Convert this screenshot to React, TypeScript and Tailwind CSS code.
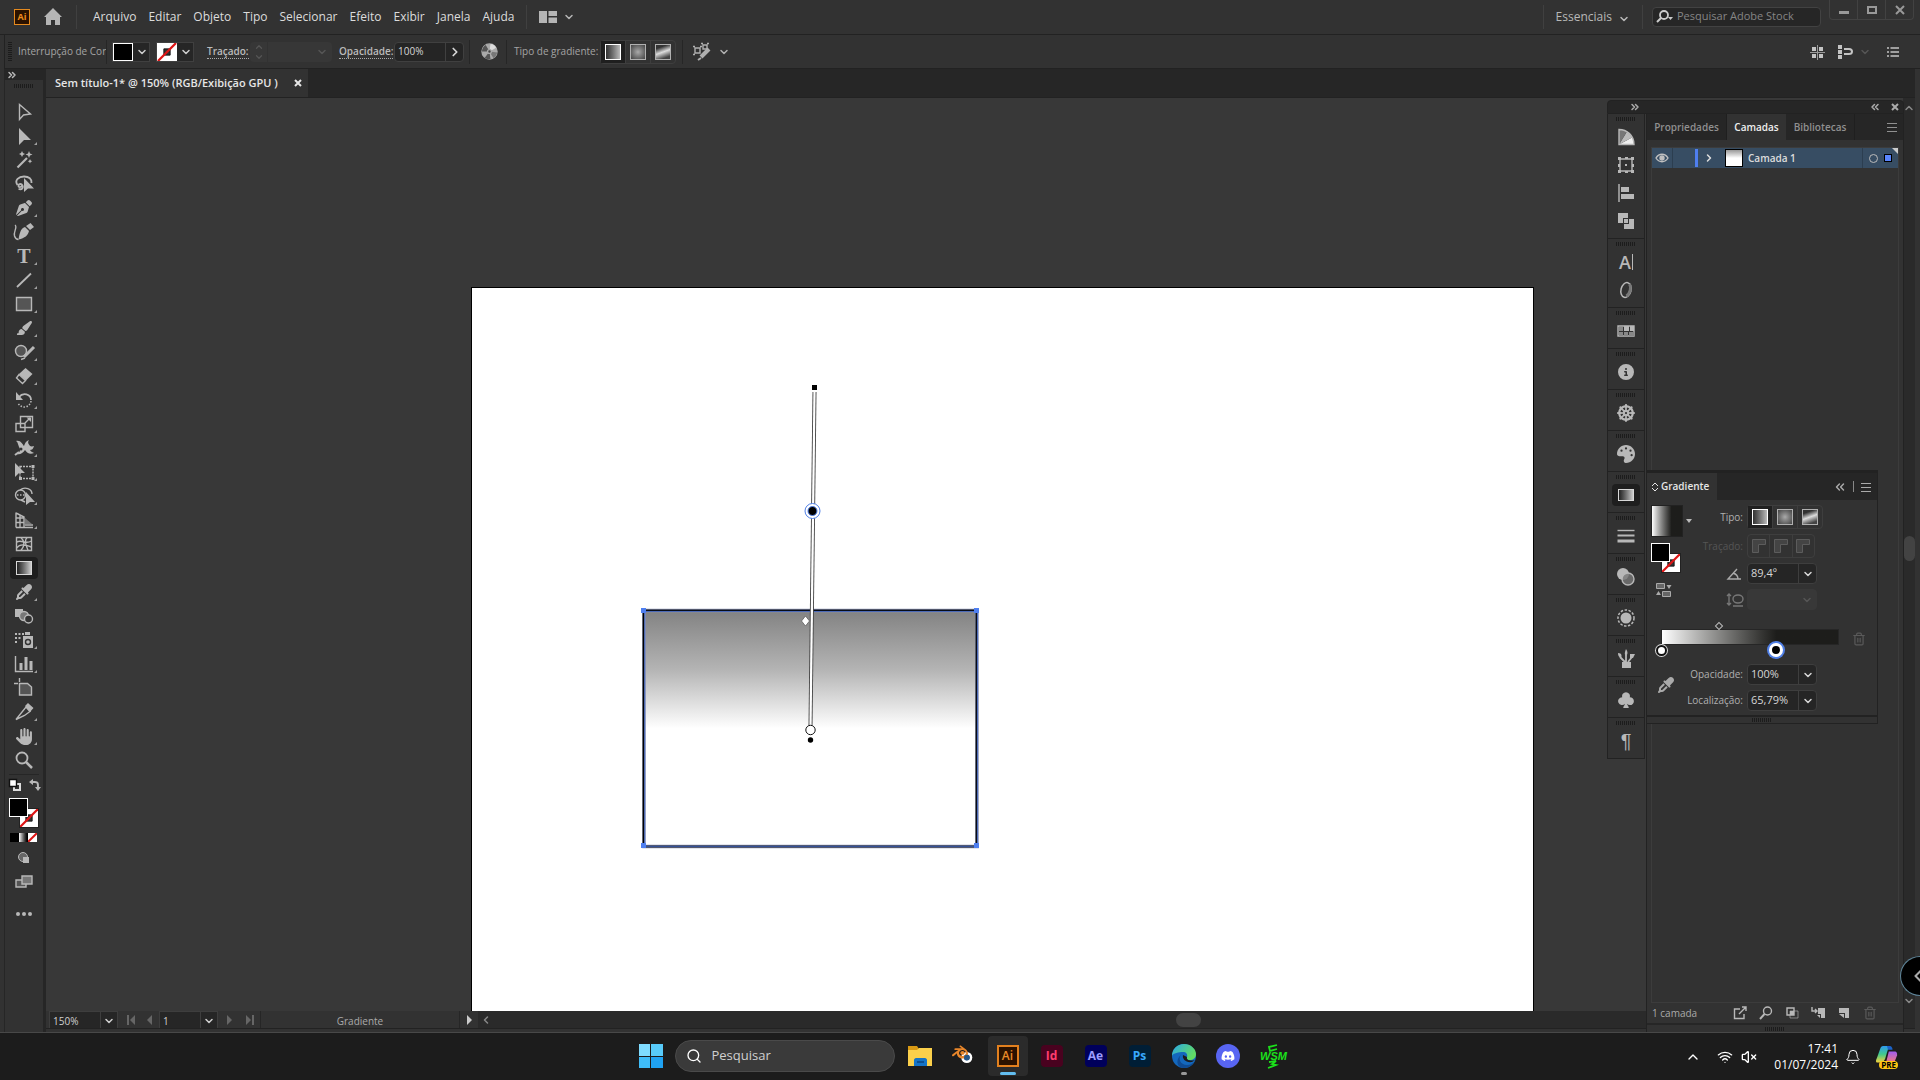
import type { ReactNode } from "react";
import { Bell, ChevronDown, ChevronLeft, ChevronRight, ChevronsLeft, ChevronsRight, ChevronUp, Search, Trash2, VolumeX, Wifi } from "lucide-react";
import { FaCircleInfo, FaDharmachakra, FaDiscord, FaEyeDropper, FaHand, FaPaintbrush, FaPalette, FaPenNib } from "react-icons/fa6";
import { BsSuitClubFill } from "react-icons/bs";
import { SiBlender } from "react-icons/si";

const MENUS = ["Arquivo", "Editar", "Objeto", "Tipo", "Selecionar", "Efeito", "Exibir", "Janela", "Ajuda"];

function Svg({ children, size = "h-[22px] w-[22px]", box = "0 0 22 22" }: { children: ReactNode; size?: string; box?: string }) {
  return (
    <svg viewBox={box} className={`${size} shrink-0 overflow-visible`} fill="none" stroke="currentColor" strokeWidth="1.4" aria-hidden="true">
      {children}
    </svg>
  );
}

const TOOLS: { name: string; more?: boolean; active?: boolean; icon: ReactNode }[] = [
  { name: "Seleção", icon: <Svg><path d="M6.500 3.500V18.500l4-4.500 7-1z" /></Svg> },
  { name: "Seleção direta", more: true, icon: <Svg><path fill="currentColor" stroke="none" d="M6 3v17l5-5h7z" /></Svg> },
  {
    name: "Varinha mágica",
    icon: (
      <Svg>
        <path strokeWidth="2.200" d="M4.500 18.500 14 9" />
        <path fill="currentColor" stroke="none" d="m9 2 1 2 2 1-2 1-1 2-1-2-2-1 2-1zM16 2l1 2.500 2.500 1L17 6.500 16 9l-1-2.500-2.500-1 2.500-1zM17 10l.7 1.500 1.500.7-1.500.7L17 14.500l-.7-1.600-1.500-.7 1.500-.7z" />
      </Svg>
    ),
  },
  {
    name: "Laço",
    icon: (
      <Svg>
        <path strokeWidth="1.800" d="M5.500 16c4 1 5-1.500 4-3.500S6 10.500 5.500 12.500s2.500 2.500 3.500 0M4.500 12C1 7 6 3.500 11 3.500S19 6 18.500 10" />
        <path fill="currentColor" stroke="none" d="M11 5v14l4-3.500h6z" />
      </Svg>
    ),
  },
  { name: "Caneta", more: true, icon: <FaPenNib className="h-4 w-4" /> },
  {
    name: "Curvatura",
    icon: (
      <Svg>
        <path fill="currentColor" stroke="none" d="m13 5 4 4 4-3-3.500-4zM12 6c-3 1-5 3-6.500 12.500C12 17 15 14.500 16 10z" />
        <path d="M2 4c3 2-2 7-.5 11 1 3 3 3.500 4 3.500" />
      </Svg>
    ),
  },
  { name: "Texto", more: true, icon: <span className="font-['Liberation_Serif',serif] text-xl leading-5 font-bold">T</span> },
  { name: "Segmento de linha", more: true, icon: <Svg><path strokeWidth="1.800" d="M4 18 18 4.500" /></Svg> },
  { name: "Retângulo", more: true, icon: <Svg><path fill="#555" d="M3.500 4.500h15v13h-15z" /></Svg> },
  { name: "Pincel", more: true, icon: <FaPaintbrush className="h-4 w-4" /> },
  {
    name: "Shaper",
    more: true,
    icon: <Svg><circle cx="8" cy="10" r="5.500" fill="#555" /><path strokeWidth="3" d="m11 16 10-10" /><path strokeWidth="1.500" d="m8 18.500 4-1.500" /></Svg>,
  },
  {
    name: "Borracha",
    more: true,
    icon: <Svg><path fill="currentColor" stroke="none" d="m12.500 3 7 6-6.500 6.500-7-6.500z" /><path d="m6 9.500 6.500 6-3 3-6-5.500z" /></Svg>,
  },
  {
    name: "Girar",
    more: true,
    icon: <Svg><path strokeWidth="1.800" d="M6 8c4-5 12-3 12 3" /><path strokeWidth="1.500" strokeDasharray="1.500 1.500" d="M18 12c-1 7-10 8-13 2" /><path fill="currentColor" stroke="none" d="M3 3v8h7z" /></Svg>,
  },
  {
    name: "Escala",
    more: true,
    icon: <Svg><path d="M7.500 3.500h12v11h-12zM3 10.500h9v8H3zM12 10l5-5" /><path fill="currentColor" stroke="none" d="M13.500 4.500h4.500V9z" /></Svg>,
  },
  {
    name: "Largura",
    more: true,
    icon: (
      <Svg>
        <path fill="currentColor" stroke="none" d="M3 4c5-1 6 3 8 5 1-3 2-5 5-6-2 3 0 4 1 6 2 1 3 0 4 0-1 3-2 4-4 4 1 2 3 2 4 3-4 2-7 0-9-3-2 3-5 5-8 4 3-2 4-4 2-7C5 8 5 5 3 4z" />
        <circle cx="8" cy="12" r="1.500" fill="#323232" stroke="none" />
        <path d="m2 18 4-3" strokeWidth="2" />
      </Svg>
    ),
  },
  {
    name: "Transformação livre",
    more: true,
    icon: <Svg><path strokeDasharray="2 1" d="M7 5.500h13v12H7z" /><path fill="currentColor" stroke="none" d="M2 2v14l4-4h6zM18.500 4h3v3h-3zM18.500 16h3v3h-3zM6 16h3v3H6z" /></Svg>,
  },
  {
    name: "Construtor de formas",
    more: true,
    icon: <Svg><circle cx="7.500" cy="10" r="5" /><path d="M7 5c5-4 12-1 12 4M8 15l4 2" /><path strokeDasharray="1.500 1.500" d="M4 10h10" /><path fill="currentColor" stroke="none" d="M13 7v13l4-3h5z" /></Svg>,
  },
  {
    name: "Grade de perspectiva",
    more: true,
    icon: <Svg><path d="M3 3.500v15M3 4l8 4v10M7 5.500v13M3 9h8M3 13.500h8M3 18.500h17" /><path fill="#777" stroke="none" d="M12 9v6h7z" /><path d="M12 16h8" /></Svg>,
  },
  {
    name: "Malha",
    icon: <Svg><path d="M3.500 4.500h15v13h-15z" /><path d="M8 4.500c4 4 4 8 0 13M14 4.500c-4 4 0 9 1 13M3.500 9c6-3 8 3 15-1M3.500 15c4-5 9-3 15-1" /></Svg>,
  },
  {
    name: "Gradiente",
    active: true,
    icon: <span className="h-3.5 w-4 border border-[#d8d8d8] bg-linear-to-r from-[#222] to-[#ccc]" />,
  },
  { name: "Conta-gotas", more: true, icon: <FaEyeDropper className="h-4 w-4" /> },
  {
    name: "Mesclagem",
    icon: <Svg><path fill="currentColor" stroke="none" d="M2 4h8v8H2z" /><circle cx="11" cy="11" r="4.500" fill="#777" /><circle cx="15.500" cy="14" r="4" fill="#323232" /></Svg>,
  },
  {
    name: "Pulverizador de símbolo",
    more: true,
    icon: (
      <Svg>
        <path strokeDasharray="2 1.500" strokeWidth="2" d="M2 5h9M2 9h6M2 13h3" />
        <path fill="currentColor" stroke="none" d="M12 3h5v3h-5zM10 7h10v12H10z" />
        <circle cx="15" cy="13" r="2.500" stroke="#323232" />
      </Svg>
    ),
  },
  { name: "Gráfico de colunas", more: true, icon: <Svg><path d="M2.500 3v15.500H20" /><path strokeWidth="3" d="M8 17v-7M13 17V4M18 17V8" /></Svg> },
  { name: "Prancheta", icon: <Svg><path d="M1 6.500h4M6.500 1v4" /><path fill="#555" d="M6.500 6.500h8l4 3.500v8h-12z" /></Svg> },
  {
    name: "Fatia",
    more: true,
    icon: <Svg><path d="M3 18.500 13 6l4 4.500-5.500 4z" /><path fill="currentColor" d="m13 5 2-2 4.500 4L17 10z" /></Svg>,
  },
  { name: "Mão", more: true, icon: <FaHand className="h-[17px] w-[17px]" /> },
  { name: "Zoom", icon: <Svg><circle cx="9" cy="9" r="5.500" strokeWidth="1.800" /><path strokeWidth="2.500" d="m13 13 6 6" /></Svg> },
];

const DOCK: { name: string; active?: boolean; icon: ReactNode }[][] = [
  [
    {
      name: "Guia de cores",
      icon: (
        <Svg>
          <path fill="#f0f0f0" stroke="none" d="M4 18.500h15c0-3-.7-5-2-7z" />
          <path fill="#bbb" stroke="none" d="m4 18.500 13-7c-1-2.500-3-4.500-5-6z" />
          <path fill="#777" stroke="none" d="m4 18.500 8-13C9.500 4 7 3.500 4 3.500z" />
          <path d="M4 3.500v15h15c0-9-7-15-15-15z" />
        </Svg>
      ),
    },
    {
      name: "Transformar",
      icon: <Svg><path d="M5 5h12v12H5z" /><path fill="currentColor" stroke="none" d="M3 3h3v3H3zM16 3h3v3h-3zM3 16h3v3H3zM16 16h3v3h-3zM10 3h3v2h-3zM10 17h3v2h-3zM3 10h2v3H3zM17 10h2v3h-2zM10 10h2v2h-2z" /></Svg>,
    },
    { name: "Alinhar", icon: <Svg><path d="M4 2v18" /><path fill="currentColor" stroke="none" d="M6 5h8v5H6zM6 12h13v5H6z" /></Svg> },
    { name: "Pathfinder", icon: <Svg><path fill="currentColor" stroke="none" d="M3 3h10v5H8v5H3zM14 9h5v10H9v-5h5zM9 9h4v4H9z" /></Svg> },
  ],
  [
    { name: "Caractere", icon: <span className="border-r border-current pr-px text-lg leading-4 font-semibold">A</span> },
    {
      name: "OpenType",
      icon: <Svg><ellipse cx="11" cy="11" rx="5" ry="7.500" transform="rotate(14 11 11)" strokeWidth="1.500" /><path strokeWidth="3" stroke="#777" d="M14.500 5c2 3 1 9-3 12" /></Svg>,
    },
  ],
  [
    {
      name: "Amostras",
      icon: <Svg><path d="M3 6h16v10H3z" fill="#323232" /><path fill="currentColor" stroke="none" d="M9 6h5v5H9zM15 6h4v5h-4z" /><path fill="#888" stroke="none" d="M4 12h4v4H4zM9 12h4v4H9zM14 12h5v4h-5zM4 7h4v4H4z" /></Svg>,
    },
  ],
  [{ name: "Informações", icon: <FaCircleInfo className="h-4 w-4" /> }],
  [{ name: "Navegador", icon: <FaDharmachakra className="h-[18px] w-[18px]" /> }],
  [{ name: "Cor", icon: <FaPalette className="h-[18px] w-[18px] -scale-x-100" /> }],
  [{ name: "Gradiente", active: true, icon: <span className="h-3 w-4 border border-[#d8d8d8] bg-linear-to-r from-[#222] to-[#ccc]" /> }],
  [{ name: "Traçado", icon: <Svg><path d="M2.500 5.500h17" /><path strokeWidth="2" d="M2.500 10.500h17" /><path strokeWidth="3" d="M2.500 16h17" /></Svg> }],
  [{ name: "Transparência", icon: <Svg><circle cx="8" cy="8" r="6" fill="currentColor" stroke="none" /><circle cx="13" cy="13" r="6" fill="#777" fillOpacity=".8" /></Svg> }],
  [
    {
      name: "Aparência",
      icon: <Svg><circle cx="11" cy="11" r="5.500" fill="currentColor" stroke="none" /><circle cx="11" cy="11" r="8" strokeWidth="1.500" strokeDasharray="2.500 1.500" /></Svg>,
    },
  ],
  [
    {
      name: "Pincéis",
      icon: <Svg><path fill="currentColor" stroke="none" d="M7 14h9v6H7z" /><path strokeWidth="1.800" d="m10 14-5-5M11 14V7M13 14l4-5" /><path fill="currentColor" stroke="none" d="M3 5c4 0 4 3 3 5C4 9 3 8 3 5zM11 1c2 3 2 5 0 7-2-2-1-4 0-7zM15 6h5l-2 4h-3z" /></Svg>,
    },
  ],
  [{ name: "Símbolos", icon: <BsSuitClubFill className="h-[18px] w-[18px]" /> }],
  [{ name: "Parágrafo", icon: <span className="font-['Liberation_Sans',sans-serif] text-xl leading-5">¶</span> }],
];

function Grip({ className = "" }: { className?: string }) {
  return <span className={`block h-1 w-5 shrink-0 bg-[repeating-linear-gradient(90deg,#1c1c1c_0_1px,transparent_1px_2px)] ${className}`} />;
}

function Divider({ className = "" }: { className?: string }) {
  return <span className={`h-6 w-px shrink-0 bg-[#262626] ${className}`} />;
}

function Chevron({ className = "" }: { className?: string }) {
  return <ChevronDown className={`h-3 w-3 shrink-0 ${className}`} strokeWidth={3} />;
}

function StrokeNone() {
  return (
    <svg viewBox="0 0 20 20" className="block h-full w-full bg-white" aria-hidden="true">
      <path fill="#323232" stroke="#111" d="M6.500 6.500h7v7h-7z" />
      <path stroke="#dd1515" strokeWidth="2.500" d="M0 20 20 0" />
    </svg>
  );
}

// fill square overlapping the stroke square
function FillStroke() {
  return (
    <div className="relative h-[30px] w-[30px] shrink-0">
      <span className="absolute right-0 bottom-0 h-5 w-5 border border-[#222]"><StrokeNone /></span>
      <span className="absolute top-0 left-0 h-[19px] w-[19px] border border-white bg-black" />
    </div>
  );
}

function TypeButtons() {
  return (
    <div className="flex h-6 w-[76px] shrink-0 divide-x divide-[#3e3e3e] rounded-sm border border-[#3e3e3e]">
      <button aria-label="Gradiente linear" className="flex flex-1 items-center justify-center bg-[#1f1f1f]">
        <span className="h-4 w-4 border border-white bg-linear-to-r from-[#333] to-[#bbb]" />
      </button>
      <button aria-label="Gradiente radial" className="flex flex-1 items-center justify-center">
        <span className="h-4 w-4 border border-[#b0b0b0] bg-radial from-[#aaa] to-[#444]" />
      </button>
      <button aria-label="Gradiente de forma livre" className="flex flex-1 items-center justify-center">
        <span className="h-4 w-4 border border-[#b0b0b0] bg-linear-[160deg,#333_20%,#ddd_50%,#444_85%]" />
      </button>
    </div>
  );
}

function Combo({ id, value, label, disabled }: { id: string; value: string; label: string; disabled?: boolean }) {
  return (
    <div className={`flex h-[21px] w-[70px] rounded-sm border ${disabled ? "border-[#383838] bg-[#383838] text-[#555]" : "border-[#3e3e3e] bg-[#252525] text-[#d6d6d6]"}`}>
      <input id={id} aria-label={label} defaultValue={value} disabled={disabled} className="w-[50px] min-w-0 bg-transparent px-[3px] text-[11px] outline-none" />
      <button aria-label={`${label}: opções`} disabled={disabled} className={`flex flex-1 items-center justify-center ${disabled ? "" : "border-l border-[#3e3e3e]"}`}>
        <Chevron />
      </button>
    </div>
  );
}

function MenuBar() {
  return (
    <header className="flex h-[35px] shrink-0 items-center border-b border-[#222] pb-px pl-3.5 text-xs text-[#dcdcdc]">
      <span className="flex h-4 w-4 shrink-0 items-center justify-center border border-[#e58a1f] bg-[#2b1200] text-[9px] font-bold text-[#ee8c1c]">Ai</span>
      <button aria-label="Início" className="ml-[13px] text-[#b5b5b5]">
        <Svg size="h-5 w-5" box="0 0 20 20"><path fill="currentColor" stroke="none" d="M10 1 1 10h2v8h5v-5h4v5h5v-8h2z" /></Svg>
      </button>
      <Divider className="ml-[13px] bg-[#404040]" />
      <nav className="ml-4 flex gap-3">
        {MENUS.map((m) => (
          <button key={m}>{m}</button>
        ))}
      </nav>
      <Divider className="ml-3 bg-[#404040]" />
      <button aria-label="Organizar documentos" className="ml-3 flex items-center gap-1.5 text-[#b5b5b5]">
        <Svg size="h-3 w-[18px]" box="0 0 18 12"><path fill="currentColor" stroke="none" d="M0 0h8v12H0zM9.500 0H18v5H9.500zM9.500 6.500H18V12H9.500z" /></Svg>
        <Chevron />
      </button>
      <div className="ml-auto flex h-full items-center">
        <Divider className="bg-[#404040]" />
        <button className="ml-3 flex items-center gap-1.5 text-[#b8b8b8]">
          Essenciais <Chevron className="mt-1" />
        </button>
        <Divider className="ml-3 bg-[#404040]" />
        <label className="ml-[9px] flex h-5 w-[169px] items-center gap-1 rounded-sm border border-[#424242] bg-[#262626] pl-1">
          <Svg size="h-3.5 w-4" box="0 0 16 14"><circle cx="7" cy="5" r="4" stroke="#ccc" strokeWidth="1.800" /><path stroke="#ccc" strokeWidth="2" d="M4 8 0 12" /><path fill="#ccc" stroke="none" d="M11 7h5l-2.500 3z" /></Svg>
          <input type="search" aria-label="Pesquisar Adobe Stock" placeholder="Pesquisar Adobe Stock" className="w-full min-w-0 bg-transparent text-[11px] outline-none placeholder:text-[#858585]" />
        </label>
        <div className="mr-1.5 ml-2 flex h-5 w-[85px] divide-x divide-[#424242] self-start rounded-b-sm border border-t-0 border-[#424242] text-[#999]">
          <button aria-label="Minimizar" className="flex flex-1 items-center justify-center"><span className="mt-1.5 h-[3px] w-2.5 bg-current" /></button>
          <button aria-label="Restaurar" className="flex flex-1 items-center justify-center"><span className="h-2 w-2.5 border-2 border-current" /></button>
          <button aria-label="Fechar" className="flex flex-1 items-center justify-center"><Svg size="h-2.5 w-2.5" box="0 0 10 10"><path strokeWidth="2" d="m1 1 8 8M9 1 1 9" /></Svg></button>
        </div>
      </div>
    </header>
  );
}

function ControlBar() {
  return (
    <div className="ml-1 flex h-[34px] shrink-0 items-center border-b border-l border-[#222] text-[10px] whitespace-nowrap text-[#a4a4a4]">
      <span className="ml-[3px] h-5 w-1 bg-[repeating-linear-gradient(180deg,#1c1c1c_0_1px,transparent_1px_2px)]" />
      <span className="ml-[6px] w-[88px]">Interrupção de Cor</span>
      <Divider />
      <button aria-label="Preenchimento" className="ml-[5px] flex h-5 w-[38px] items-center border border-[#404040] bg-[#262626] text-[#ccc]">
        <span className="h-full w-5 border border-white bg-black" />
        <Chevron className="ml-[3px]" />
      </button>
      <button aria-label="Traçado" className="ml-[6px] flex h-5 w-[38px] items-center border border-[#404040] bg-[#262626] text-[#ccc]">
        <span className="h-full w-5"><StrokeNone /></span>
        <Chevron className="ml-[3px]" />
      </button>
      <label htmlFor="stroke" className="ml-[13px] w-[43px]"><span className="border-b border-dotted border-[#aaa] font-semibold text-[#bbb]">Traçado:</span></label>
      <div className="flex h-5 w-[82px] items-center rounded-sm bg-[#373737] text-[#555]">
        <span className="flex w-[18px] flex-col items-center border-r border-[#323232]">
          <ChevronUp className="h-2.5 w-2.5" strokeWidth={3} />
          <ChevronDown className="h-2.5 w-2.5" strokeWidth={3} />
        </span>
        <input id="stroke" disabled className="w-12 bg-transparent" />
        <Chevron />
      </div>
      <label htmlFor="opacity" className="ml-[7px] w-[55px]"><span className="border-b border-dotted border-[#aaa] font-semibold text-[#bbb]">Opacidade:</span></label>
      <div className="flex h-5 w-[70px] rounded-sm border border-[#404040] bg-[#252525] text-[#d6d6d6]">
        <input id="opacity" defaultValue="100%" className="w-[50px] bg-transparent px-[3px] text-[10px]" />
        <button aria-label="Ajustar opacidade" className="flex flex-1 items-center justify-center border-l border-[#404040]"><ChevronRight className="h-3.5 w-3.5" strokeWidth={3} /></button>
      </div>
      <Divider className="ml-[5px]" />
      <button aria-label="Recolorir arte" className="ml-[11px] text-[#aaa]">
        <Svg size="h-[17px] w-[17px]" box="0 0 18 18">
          <circle cx="9" cy="9" r="8" fill="#aaa" />
          <path fill="#555" stroke="none" d="M9 9 1 9c0-3 2-6 4-7zM9 9l-5 6.500C6 17 8 17.500 10 17z" />
          <path fill="#ddd" stroke="none" d="m9 9 7-4c-1-2-3-4-6-4z" />
          <path fill="#777" stroke="none" d="m9 9 8 1c0 2-2 5-4 6z" />
          <circle cx="9" cy="9" r="2" fill="#444" />
        </Svg>
      </button>
      <Divider className="ml-2" />
      <span className="ml-[7px] w-[86px]">Tipo de gradiente:</span>
      <TypeButtons />
      <Divider className="ml-[6px]" />
      <button aria-label="Editar pontos" className="ml-2.5 flex items-center gap-2 text-[#b0b0b0]">
        <Svg size="h-[17px] w-[17px]" box="0 0 17 17"><path d="M2 5h5v5H2zM10 2h4v4h-4zM0 3.500h2M7 3.500h2M0 11.500h2M8 .5h2M14 .5h2" /><path strokeWidth="4" d="m8 14 8-8" /><path d="m5 17 3-2" strokeWidth="2" /></Svg>
        <Chevron />
      </button>
      <div className="mr-[21px] ml-auto flex items-center text-[#c4c4c4]">
        <button aria-label="Alinhar à grade de pixels">
          <Svg size="h-4 w-4" box="0 0 16 16"><path fill="currentColor" stroke="none" d="M3 3h4v4H3zM10 3h4v4h-4zM3 10h4v4H3zM10 10h4v4h-4z" /><path stroke="#999" strokeWidth="1" d="M8.500 1v15M1 8.500h15" /></Svg>
        </button>
        <button aria-label="Opções de encaixe" className="ml-3 flex items-center gap-1.5">
          <Svg size="h-4 w-4" box="0 0 16 16"><path fill="currentColor" stroke="none" d="M1 1h4v4H1zM1 6h4v4H1zM1 11h4v4H1z" /><path strokeWidth="2" d="M7 5h5c4 0 4 5 0 5H7" /></Svg>
          <Chevron className="text-[#555]" />
        </button>
        <button aria-label="Menu do painel de controle" className="ml-4">
          <Svg size="h-3 w-3" box="0 0 12 12"><path d="M0 2h2M0 6h2M0 10h2M3.500 2H12M3.500 6H12M3.500 10H12" /></Svg>
        </button>
      </div>
    </div>
  );
}

function Toolbar() {
  return (
    <aside className="flex w-[42px] shrink-0 flex-col border-r-3 border-l border-[#262626] text-[#b8b8b8]">
      <div className="flex h-[11px] shrink-0 items-center bg-[#262626] pl-px"><ChevronsRight className="h-3 w-3" strokeWidth={3} /></div>
      <Grip className="mt-1 mb-3 ml-[9px]" />
      <div className="flex flex-col">
        {TOOLS.map((t) => (
          <button key={t.name} aria-label={t.name} className="relative flex h-6 items-center justify-center">
            <span className={`flex h-[22px] w-7 items-center justify-center rounded-sm ${t.active ? "bg-[#1e1e1e]" : ""}`}>{t.icon}</span>
            {t.more && <span className="absolute right-1.5 bottom-[3px] border-b-3 border-l-3 border-b-[#a0a0a0] border-l-transparent" />}
          </button>
        ))}
      </div>
      <div className="mx-1 mt-0.5 border-t border-[#262626]" />
      <div className="mt-0.5 mr-0.5 ml-1 flex h-4 items-center justify-between">
        <button aria-label="Preenchimento e traçado padrão"><Svg size="h-3 w-3" box="0 0 12 12"><path stroke="#ddd" strokeWidth="2" d="M5 5h6v6H5z" /><path fill="#fff" stroke="#111" d="M.5.500h7v7h-7z" /></Svg></button>
        <button aria-label="Alternar preenchimento e traçado"><Svg size="h-3 w-3" box="0 0 12 12"><path strokeWidth="2" d="M2 3h4c3 0 3 1 3 6" /><path fill="currentColor" stroke="none" d="M0 3 4 0v6zM6 8h6l-3 4z" /></Svg></button>
      </div>
      <div className="mt-[5px] ml-1"><FillStroke /></div>
      <div className="mt-[5px] ml-[5px] flex h-[9px] w-[27px] shrink-0">
        <button aria-label="Cor" className="flex-1 bg-black" />
        <button aria-label="Gradiente" className="flex-1 bg-linear-to-r from-white to-black" />
        <button aria-label="Nenhum" className="flex-1 bg-white">
          <svg viewBox="0 0 9 9" className="block h-full w-full" aria-hidden="true"><path stroke="#dd1515" strokeWidth="2" d="M0 9 9 0" /></svg>
        </button>
      </div>
      <button aria-label="Modo de desenho" className="mt-2 flex h-4 items-center justify-center"><Svg size="h-3 w-3" box="0 0 12 12"><circle cx="5" cy="5" r="4.500" fill="#666" strokeWidth="1" /><path fill="currentColor" stroke="none" d="M5 5h6v6H5z" /></Svg></button>
      <button aria-label="Modo de tela" className="mt-2 flex h-4 items-center justify-center"><Svg size="h-[14px] w-[18px]" box="0 0 18 14"><path fill="#555" d="M1 5h10v7H1z" /><path fill="#777" d="M7 1h10v8H7z" /></Svg></button>
      <button aria-label="Editar barra de ferramentas" className="mt-4 flex h-4 items-center justify-center gap-[2px]">
        <span className="h-1 w-1 rounded-full bg-current" />
        <span className="h-1 w-1 rounded-full bg-current" />
        <span className="h-1 w-1 rounded-full bg-current" />
      </button>
    </aside>
  );
}

function Canvas() {
  return (
    <main className="relative min-w-0 flex-1 overflow-hidden bg-[#383838]">
      <div className="absolute top-[189px] left-[425px] h-[900px] w-[1063px] border border-black bg-white">
        {/* selected rectangle and its gradient annotator */}
        <svg viewBox="0 -1 620 580" className="h-[580px] w-[620px]" role="img" aria-label="Retângulo com gradiente">
          <defs>
            <linearGradient id="fill" x1="0" y1="0" x2="0" y2="1">
              <stop offset="0" stopColor="#828282" />
              <stop offset=".25" stopColor="#b4b4b4" />
              <stop offset=".5" stopColor="#fff" />
            </linearGradient>
          </defs>
          <rect x="172" y="321.500" width="333" height="236" fill="url(#fill)" stroke="#8a93b5" strokeWidth="3.500" />
          <rect x="171.500" y="321.500" width="333" height="236" fill="none" stroke="#000" strokeWidth="1.800" />
          <rect x="172.800" y="322.300" width="332.500" height="235" fill="none" stroke="#4a72d8" strokeWidth=".8" />
          <path d="M342.500 103 338.500 438" stroke="#444" strokeWidth="4" />
          <path d="M342.500 103 338.500 438" stroke="#fff" strokeWidth="2.200" />
          <path fill="#4f7ff0" d="M169 319h5v5h-5zM502 319h5v5h-5zM169 554h5v5h-5zM502 554h5v5h-5z" />
          <path d="M340 96h5v5h-5z" />
          <circle cx="340.500" cy="222" r="7.500" fill="#fff" stroke="#4f7fe6" />
          <circle cx="340.500" cy="222" r="4.500" fill="#000" stroke="#4f7fe6" />
          <path fill="#fff" stroke="#555" strokeWidth=".7" d="m333.500 327 4 5-4 5-4-5z" />
          <circle cx="338.500" cy="441" r="4.700" fill="#fff" stroke="#111" />
          <circle cx="338.500" cy="451" r="2.700" />
        </svg>
      </div>
    </main>
  );
}

function StatusBar() {
  return (
    <div className="flex h-[17px] shrink-0 items-stretch bg-[#323232] pl-[3px] text-[10px] text-[#d0d0d0]">
      <div className="flex w-[69px] border border-b-0 border-[#3e3e3e] bg-[#262626]">
        <input aria-label="Nível de zoom" defaultValue="150%" className="w-[50px] bg-transparent px-[3px] pt-0.5" />
        <button aria-label="Opções de zoom" className="flex flex-1 items-center justify-center border-l border-[#3e3e3e] pt-0.5"><Chevron /></button>
      </div>
      <div className="flex w-[41px] items-center justify-around pl-1 text-[#666]">
        <button aria-label="Primeira"><Svg size="h-2.5 w-2.5" box="0 0 10 10"><path fill="currentColor" stroke="none" d="M1 0h2v10H1zM9 0v10L4 5z" /></Svg></button>
        <button aria-label="Anterior"><Svg size="h-2.5 w-2.5" box="0 0 10 10"><path fill="currentColor" stroke="none" d="M7 0v10L2 5z" /></Svg></button>
      </div>
      <div className="flex w-[59px] border border-b-0 border-[#3e3e3e] bg-[#262626]">
        <input aria-label="Prancheta" defaultValue="1" className="w-10 bg-transparent px-[3px] pt-0.5" />
        <button aria-label="Lista de pranchetas" className="flex flex-1 items-center justify-center border-l border-[#3e3e3e] pt-0.5"><Chevron /></button>
      </div>
      <div className="flex w-[42px] items-center justify-around text-[#666]">
        <button aria-label="Próxima"><Svg size="h-2.5 w-2.5" box="0 0 10 10"><path fill="currentColor" stroke="none" d="M3 0v10l5-5z" /></Svg></button>
        <button aria-label="Última"><Svg size="h-2.5 w-2.5" box="0 0 10 10"><path fill="currentColor" stroke="none" d="M7 0h2v10H7zM1 0v10l5-5z" /></Svg></button>
      </div>
      <span className="w-[200px] border-x border-[#262626] text-center leading-5 text-[#aaa]">Gradiente</span>
      <button aria-label="Mostrar na barra de status" className="flex w-[18px] items-center justify-center"><Svg size="h-2.5 w-2.5" box="0 0 10 10"><path fill="#ccc" stroke="none" d="M3 0v10l5-5z" /></Svg></button>
      <div className="flex flex-1 items-center bg-[#2a2a2a]">
        <ChevronLeft className="ml-[2px] h-3 w-3 text-[#888]" strokeWidth={3} />
        <span className="ml-[684px] h-3.5 w-[25px] rounded-full bg-[#434343]" />
      </div>
    </div>
  );
}

function IconDock() {
  return (
    <div className="flex w-[38px] shrink-0 flex-col self-start border-x border-[#222] bg-[#323232] text-[#b8b8b8]">
      {DOCK.map((group) => (
        <div key={group[0].name} className="flex flex-col items-center border-b border-[#222] pb-[3px]">
          <Grip className="mt-[3px] mb-[2px]" />
          {group.map((d) => (
            <button key={d.name} aria-label={d.name} className="flex h-7 items-center">
              <span className={`flex h-[22px] w-7 items-center justify-center rounded-sm ${d.active ? "bg-[#1e1e1e]" : ""}`}>{d.icon}</span>
            </button>
          ))}
        </div>
      ))}
    </div>
  );
}

function LayersPanel() {
  return (
    <section className="flex min-w-0 flex-1 flex-col border-x border-[#222] bg-[#323232] text-[10px]">
      <div className="flex h-[26px] shrink-0 bg-[#262626] font-semibold text-[#909090]">
        <button className="w-[80px] border-r border-[#1f1f1f]">Propriedades</button>
        <button className="w-[59px] bg-[#323232] text-[#eee]">Camadas</button>
        <button className="w-[69px] border-r border-[#1f1f1f]">Bibliotecas</button>
        <button aria-label="Menu do painel" className="mr-[5px] ml-auto"><Svg size="h-3 w-3" box="0 0 12 12"><path strokeWidth="1" d="M1 2.500h10M1 6.500h10M1 10.500h10" /></Svg></button>
      </div>
      <div className="mx-1 mt-[7px] flex-1 border border-[#3c3c3c]">
        <div className="relative flex h-5 items-center bg-[#374d63] text-[#ddd]">
          <button aria-label="Visibilidade" className="flex w-5 justify-center text-[#c0c0c0]">
            <Svg size="h-3 w-3" box="0 0 12 12"><path d="M0 6c3-5 9-5 12 0-3 5-9 5-12 0z" /><circle cx="6" cy="6" r="2" fill="currentColor" /></Svg>
          </button>
          <span className="h-5 w-[23px] border-l border-[#2c3e50]" />
          <span className="h-[18px] w-[3px] bg-[#4f7ff0]" />
          <button aria-label="Expandir" className="ml-[5px]"><ChevronRight className="h-3 w-3" strokeWidth={3} /></button>
          <span className="ml-[10px] h-[18px] w-[18px] border border-black bg-linear-to-b from-[#999] via-white via-50% to-white" />
          <span className="ml-[5px] font-semibold">Camada 1</span>
          <span className="ml-auto flex h-5 w-9 items-center gap-1.5 border-l border-[#2c3e50] pl-1.5">
            <span className="h-[9px] w-[9px] rounded-full border border-[#bbb]" />
            <span className="h-2 w-2 border border-black bg-[#5a86ff]" />
          </span>
          <span className="absolute top-0 right-0 border-t-6 border-l-6 border-t-[#ccc] border-l-transparent" />
        </div>
      </div>
      <div className="flex h-5 shrink-0 items-center pl-[5px] text-[#aaa]">
        <span className="w-[81px]">1 camada</span>
        <div className="flex gap-3 text-[#b8b8b8]">
          <button aria-label="Coletar para exportação"><Svg size="h-3.5 w-3.5" box="0 0 14 14"><path d="M7 3H1.500v9.500H11V8M6 8l7-7M9 1h4v4" /></Svg></button>
          <button aria-label="Localizar objeto"><Svg size="h-3.5 w-3.5" box="0 0 14 14"><circle cx="8.500" cy="5" r="4" /><path strokeWidth="2" d="M5.500 8 1 13" /></Svg></button>
          <button aria-label="Máscara de recorte"><Svg size="h-3.5 w-3.5" box="0 0 14 14"><path d="M2 2h7v7H2z" /><path fill="currentColor" stroke="none" d="M5 5h4v4H5z" /><path d="M5 5h8v7H5z" strokeWidth="1" opacity=".6" /></Svg></button>
          <button aria-label="Nova subcamada"><Svg size="h-3.5 w-3.5" box="0 0 14 14"><path d="M1 1v4h5M4 3l2 2-2 2" /><path fill="currentColor" stroke="none" d="M7 2h7v10h-4V8H7z" /><path fill="currentColor" stroke="none" d="m6 9 3 3V9z" /></Svg></button>
          <button aria-label="Nova camada"><Svg size="h-3.5 w-3.5" box="0 0 14 14"><path fill="currentColor" stroke="none" d="M2 2h10v10H8V7H2z" /><path fill="currentColor" stroke="none" d="m2 8 5 4V8z" /></Svg></button>
          <button aria-label="Excluir" className="text-[#5a5a5a]"><Trash2 className="h-3.5 w-3.5" /></button>
        </div>
      </div>
      <div className="flex h-[9px] shrink-0 items-center justify-center border-t-2 border-[#262626]"><Grip /></div>
    </section>
  );
}

function Row({ label, htmlFor, icon, muted, children }: { label?: string; htmlFor?: string; icon?: ReactNode; muted?: boolean; children: ReactNode }) {
  return (
    <div className="flex items-center justify-end gap-1">
      {label && <label htmlFor={htmlFor} className={`text-[10px] ${muted ? "text-[#555]" : "text-[#b0b0b0]"}`}>{label}</label>}
      {icon}
      <div className="w-[74px]">{children}</div>
    </div>
  );
}

function GradientPanel() {
  return (
    <section className="absolute top-[370px] left-[39px] flex w-[232px] flex-col border border-t-3 border-[#222] bg-[#323232] text-[#aaa]">
      <div className="flex h-[27px] items-center bg-[#262626]">
        <h2 className="flex h-full w-[70px] items-center gap-0.5 bg-[#323232] pl-1 text-[10px] font-semibold text-[#e6e6e6]">
          <Svg size="h-2.5 w-2" box="0 0 8 10"><path strokeWidth="1" d="m1 4 3-3 3 3M1 6l3 3 3-3" /></Svg>
          Gradiente
        </h2>
        <ChevronsLeft className="ml-auto h-3.5 w-3.5" strokeWidth={2.5} />
        <span className="ml-1.5 h-[11px] w-px bg-[#888]" />
        <button aria-label="Menu do painel" className="mr-[5px] ml-1.5"><Svg size="h-3 w-3" box="0 0 12 12"><path strokeWidth="1" d="M1 2.500h10M1 6.500h10M1 10.500h10" /></Svg></button>
      </div>
      <div className="flex h-[116px] pt-[5px]">
        <div className="w-[45px] pl-1">
          <div className="flex items-center gap-[3px]">
            <span className="h-8 w-8 shrink-0 border border-[#222] bg-linear-to-r from-white to-[#1d1d1b] to-65%" />
            <span className="border-x-3 border-t-4 border-x-transparent border-t-[#bbb]" />
          </div>
          <div className="mt-[6px]"><FillStroke /></div>
          <button aria-label="Inverter gradiente" className="mt-2.5 ml-[5px] block">
            <Svg size="h-[15px] w-4" box="0 0 16 15"><path fill="#666" strokeWidth="1" d="M.5.500h8v5h-8zM6.500 8.500h8v5h-8z" /><path fill="currentColor" stroke="none" d="M10.500 2h5L13 6zM0 12h5L2.500 8z" /></Svg>
          </button>
        </div>
        <div className="flex flex-1 flex-col gap-[5px] pr-14">
          <Row label="Tipo:"><TypeButtons /></Row>
          <Row label="Traçado:" muted>
            <div className="flex h-6 w-[68px] divide-x divide-[#3e3e3e] rounded-sm border border-[#3e3e3e] text-[#5c5c5c]">
              {["Dentro do traçado", "Ao longo do traçado", "Através do traçado"].map((n) => (
                <button key={n} aria-label={n} disabled className="flex flex-1 items-center justify-center">
                  <Svg size="h-3.5 w-3.5" box="0 0 14 14"><path strokeWidth="1" fill="#444" d="M.5 13.500V.5h13v5h-7v8z" /></Svg>
                </button>
              ))}
            </div>
          </Row>
          <Row icon={<Svg size="mr-0.5 h-3 w-3.5" box="0 0 14 12"><path d="M10 1 1 11h13M6 5c3 1 5 3 5 6" /></Svg>}>
            <Combo id="angle" label="Ângulo" value="89,4º" />
          </Row>
          <Row icon={<Svg size="h-3.5 w-4" box="0 0 16 14"><path stroke="#777" d="M2 1v11M0 3l2-2 2 2M0 10l2 2 2-2M6 13h10" /><ellipse cx="11" cy="6" rx="5" ry="4" stroke="#777" /></Svg>}>
            <Combo id="aspect" label="Proporção" value="" disabled />
          </Row>
        </div>
      </div>
      <div className="relative mt-[13px] ml-[14px] h-[35px]">
        <div className="h-4 w-[178px] border border-[#262626] bg-linear-to-r from-white via-[#858583] via-33% to-[#1d1d1b] to-65%" />
        <span className="absolute -top-1.5 left-[55px] h-1.5 w-1.5 rotate-45 border border-[#bbb]" />
        <span className="absolute top-4 -left-[5px] h-[11px] w-[11px] rounded-full border-2 border-[#111] bg-white ring ring-[#ddd]" />
        <span className="absolute top-3.5 left-[108px] h-3.5 w-3.5 rounded-full border-3 border-white bg-black ring-2 ring-[#4f7fe6]" />
        <button aria-label="Excluir interrupção" className="absolute top-[3px] right-[11px] text-[#5a5a5a]"><Trash2 className="h-3.5 w-3.5" /></button>
      </div>
      <div className="flex h-[51px]">
        <button aria-label="Seletor de cores" className="mt-[13px] ml-[11px] self-start"><FaEyeDropper className="h-4 w-4" /></button>
        <div className="flex flex-1 flex-col gap-[5px] pr-14">
          <Row label="Opacidade:" htmlFor="stop-opacity"><Combo id="stop-opacity" label="Opacidade" value="100%" /></Row>
          <Row label="Localização:" htmlFor="stop-location"><Combo id="stop-location" label="Localização" value="65,79%" /></Row>
        </div>
      </div>
      <div className="flex h-2 items-center justify-center border-t-2 border-[#222]"><Grip /></div>
    </section>
  );
}

function AppTile({ name, className, children }: { name: string; className: string; children?: ReactNode }) {
  return (
    <button aria-label={name} className="flex w-11 items-center justify-center">
      <span className={`flex h-[22px] w-[22px] items-center justify-center text-xs font-bold ${className}`}>{children}</span>
    </button>
  );
}

function Taskbar() {
  return (
    <footer className="relative flex h-[47px] shrink-0 items-center justify-center bg-[#1c1c1c] pb-px text-white">
      <div className="flex h-full items-center pl-3">
        <button aria-label="Iniciar" className="grid h-6 w-6 grid-cols-2 gap-px">
          <span className="bg-[#7fdcff]" />
          <span className="bg-[#58cbfa]" />
          <span className="bg-[#3fbcf8]" />
          <span className="bg-[#1fa2f2]" />
        </button>
        <label className="mr-[3px] ml-3 flex h-8 w-[220px] items-center gap-2.5 rounded-full border border-[#4a4a4a] bg-[#3a3a3a] pl-[10px]">
          <Search className="h-4 w-4 shrink-0" />
          <input type="search" placeholder="Pesquisar" aria-label="Pesquisar" className="w-40 bg-transparent text-[13px] outline-none placeholder:text-[#d0d0d0]" />
        </label>
        <button aria-label="Explorador de Arquivos" className="flex w-11 justify-center">
          <Svg size="h-6 w-6" box="0 0 24 24">
            <path fill="#d99a14" stroke="none" d="M0 2h9l2 3v5H0z" />
            <path fill="#fbd04b" stroke="none" d="M0 6h9l2-2h13v18H0z" />
            <path fill="#1473c6" stroke="none" d="M6 16c0-1 1-2 2-2h9c1 0 2 1 2 2v6H6z" />
            <path stroke="#0b4f91" strokeWidth="2" d="M9 18h7" />
          </Svg>
        </button>
        <button aria-label="Blender" className="flex w-11 justify-center">
          <Svg size="h-6 w-6" box="0 0 24 24">
            <circle cx="14.800" cy="13.500" r="5.500" fill="#fff" stroke="none" />
            <circle cx="14.800" cy="13.500" r="3" fill="#265787" stroke="none" />
            <g stroke="none" className="text-[#e8862a]"><SiBlender x="0" y="0" width="24" height="24" color="#e8862a" /></g>
            <circle cx="14.800" cy="13.500" r="2.800" fill="#265787" stroke="none" />
          </Svg>
        </button>
        <button aria-label="Illustrator" className="relative flex h-10 w-11 items-center justify-center">
          <span className="flex h-10 w-10 items-center justify-center rounded bg-[#2b2b2b]">
            <span className="flex h-[22px] w-[22px] items-center justify-center border-2 border-[#e2801e] bg-[#2b1200] text-xs font-semibold text-[#e98a28]">Ai</span>
          </span>
          <span className="absolute bottom-px h-[3px] w-4 rounded-full bg-[#62bdf0]" />
        </button>
        <AppTile name="InDesign" className="rounded bg-[#49021f] text-[#ff3d70]">Id</AppTile>
        <AppTile name="After Effects" className="rounded bg-[#00005b] text-[#9c9cff]">Ae</AppTile>
        <AppTile name="Photoshop" className="rounded bg-[#001e36] text-[#38a9ff]">Ps</AppTile>
        <button aria-label="Edge" className="relative flex h-10 w-11 items-center justify-center">
          <Svg size="h-6 w-6" box="0 0 24 24">
            <defs>
              <linearGradient id="edge" x1="0" y1="0" x2="1" y2=".5"><stop stopColor="#2aa8e8" /><stop offset="1" stopColor="#62dc62" /></linearGradient>
            </defs>
            <circle cx="12" cy="12" r="12" fill="#1468bd" stroke="none" />
            <path fill="url(#edge)" stroke="none" d="M0 12C0 5 5 0 12 0s12 5 12 10c0 4-3 6-6 6-4 0-4-2-3-3 1-3-1-5-4-5-4 0-10 1-11 4z" />
            <path fill="#0f4b94" stroke="none" d="M9 11c-3 3-1 10 6 10 3 0 5-1 7-3-3 6-10 7-14 5-4-3-3-9 1-12z" />
            <path fill="#1c1c1c" stroke="none" d="M11 11c-1 4 3 8 9 7l3-2c-3 1-9 1-8-3z" />
          </Svg>
          <span className="absolute bottom-px h-[3px] w-1.5 rounded-full bg-[#999]" />
        </button>
        <button aria-label="Discord" className="flex w-11 justify-center">
          <span className="flex h-6 w-6 items-center justify-center rounded-full bg-[#5865f2]"><FaDiscord className="h-3.5 w-3.5" /></span>
        </button>
        <button aria-label="WSM" className="flex w-11 justify-center">
          <Svg size="h-6 w-6" box="0 0 24 24">
            <text x="0" y="16" fontSize="11" fill="#1be01b" stroke="none" fontFamily="Liberation Sans" fontWeight="bold" fontStyle="italic">WSM</text>
            <path stroke="#1be01b" strokeWidth="1.800" d="m17 1-8 2 1 4 7-2M9 18l7-1-4 3 4 1-8 3" />
          </Svg>
        </button>
      </div>
      <div className="absolute inset-y-0 right-[18px] flex items-center">
        <button aria-label="Ícones ocultos"><ChevronUp className="h-4 w-4" /></button>
        <button aria-label="Rede e som" className="ml-4 flex items-center gap-2">
          <Wifi className="h-4 w-4" />
          <VolumeX className="h-4 w-4" />
        </button>
        <time className="ml-4 w-[65px] text-right text-xs leading-4 whitespace-nowrap">
          17:41
          <br />
          01/07/2024
        </time>
        <button aria-label="Notificações" className="ml-[7px]"><Bell className="h-4 w-4" strokeWidth={1.5} /></button>
        <button aria-label="Copilot" className="relative mr-1 ml-[15px] h-[22px] w-[22px]">
          <Svg box="0 0 24 24">
            <defs>
              <linearGradient id="cop" x1="0" y1="0" x2="0" y2="1"><stop stopColor="#2e9bf0" /><stop offset=".5" stopColor="#41c98c" /><stop offset="1" stopColor="#f5d13a" /></linearGradient>
              <linearGradient id="cop2" x1="0" y1="0" x2="0" y2="1"><stop stopColor="#a05cf0" /><stop offset="1" stopColor="#f27a7a" /></linearGradient>
            </defs>
            <path fill="url(#cop)" stroke="none" d="M5 2c1-2 2-2 4-2h6c-2 2-3 8-5 14-1 2-2 4-4 4H2c-3 0-2-3-1-5z" />
            <path fill="#1b63c9" stroke="none" d="M12 0h3c2 0 3 2 3 4h-5z" />
            <path fill="url(#cop2)" stroke="none" d="M14 6h6c3 0 3 2 3 4l-3 8h-9z" />
          </Svg>
          <span className="absolute right-0 -bottom-px rounded-sm bg-[#ffc412] px-0.5 text-[8px] leading-[8px] font-bold text-black">PRE</span>
        </button>
      </div>
    </footer>
  );
}

export default function App() {
  return (
    <div className="flex h-screen flex-col overflow-hidden bg-[#323232] font-['Open_Sans','Noto_Sans',sans-serif]">
      <MenuBar />
      <ControlBar />
      <div className="relative flex min-h-0 flex-1 border-b border-[#484848] pr-[5px] pl-1">
        <Toolbar />
        <div className="flex min-w-0 flex-1 flex-col">
          <div className="flex h-[29px] shrink-0 border-b border-[#222] bg-[#262626]">
            <div className="flex w-[262px] items-center justify-between bg-[#323232] pr-1.5 pl-[9px] text-[11px] font-semibold text-[#e6e6e6]">
              Sem título-1* @ 150% (RGB/Exibição GPU )
              <button aria-label="Fechar documento"><Svg size="h-2 w-2" box="0 0 8 8"><path strokeWidth="2" d="m1 1 6 6M7 1 1 7" /></Svg></button>
            </div>
          </div>
          <div className="flex min-h-0 flex-1">
            <Canvas />
            <div className="flex w-3 shrink-0 flex-col items-center bg-[#2a2a2a] text-[#888]">
              <ChevronUp className="mt-1 h-3 w-3" strokeWidth={3} />
              <span className="mt-[422px] h-[25px] w-[11px] rounded-full bg-[#434343]" />
              <ChevronDown className="mt-auto mb-1 h-3 w-3" strokeWidth={3} />
            </div>
          </div>
          <StatusBar />
          <div className="h-1 shrink-0 border-t border-[#222] bg-[#323232]" />
        </div>
        {/* docked panels float over the document window */}
        <div className="absolute top-[31px] right-4 bottom-0 flex w-[297px] flex-col">
          <div className="flex h-[14px] shrink-0 items-center rounded-t-sm border border-[#222] bg-[#262626] text-[#aaa]">
            <ChevronsRight className="ml-[21px] h-3 w-3" strokeWidth={3} />
            <ChevronsLeft className="mr-2.5 ml-auto h-3 w-3" strokeWidth={3} />
            <button aria-label="Fechar painel" className="mr-1"><Svg size="h-2 w-2" box="0 0 8 8"><path strokeWidth="2" d="m1 1 6 6M7 1 1 7" /></Svg></button>
          </div>
          <div className="flex min-h-0 flex-1 gap-px">
            <IconDock />
            <LayersPanel />
          </div>
          <GradientPanel />
        </div>
        <button aria-label="Abrir barra lateral" className="absolute right-0 bottom-[36px] flex h-10 w-5 items-center overflow-hidden rounded-l-full border border-r-0 border-[#5f8599] bg-black pl-[7px] text-[#aaa]">
          <ChevronLeft className="h-5 w-5 shrink-0" strokeWidth={2.5} />
        </button>
      </div>
      <Taskbar />
    </div>
  );
}
